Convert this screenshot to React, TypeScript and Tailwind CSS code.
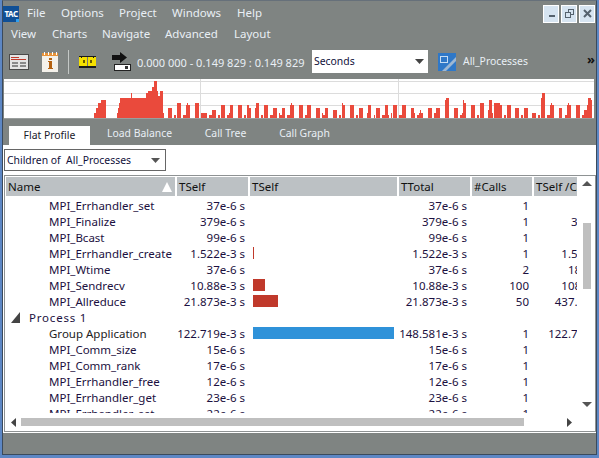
const CHART_A: [number, number, number][] = [
  [282,288,108],[288,294,94],[294,303,78],[303,318,69],[351,354,108],[354,357,94],[357,360,78],[360,393,63],[393,396,48],[396,438,63],[438,444,48],[444,447,42],[447,456,42],[456,462,30],[462,471,12],[471,474,42],[474,480,57],[480,489,42],[489,492,108],
  [504,516,93],[522,528,114],[531,543,78],[549,558,114],[558,561,84],[561,564,78],[564,570,84],[585,597,78],[603,621,108],[627,636,114],[636,648,99],[654,660,114],[663,675,84],[681,687,114],[687,690,108],[690,699,84],[714,726,84],[732,738,114],[741,747,84],[747,753,93],[765,768,93],[768,777,78],[783,789,114],[792,804,84],[810,819,114],[819,831,93],[837,840,108],[840,846,114],[846,855,93],[861,870,114],[870,873,84],[873,876,78],[876,882,84],[897,900,84],
];
const CHART_B: [number, number, number][] = [
  [0,12,84],[18,24,114],[24,36,84],[51,63,93],[69,72,108],[72,78,114],[78,87,93],[102,114,99],[120,126,114],[129,132,78],[132,138,84],[153,165,84],[171,177,114],[180,192,93],[204,207,108],[207,216,84],[225,228,114],[231,243,93],[249,258,114],[258,267,84],[267,270,114],[276,279,108],[282,294,84],[300,309,114],[309,321,84],[336,345,93],[345,348,108],[354,360,114],[360,363,108],[363,366,99],[366,372,108],[387,399,93],[405,411,108],[411,423,93],[438,441,69],[441,450,63],[465,477,93],[483,489,114],[489,492,108],[492,495,69],[495,500,78],[516,528,84],[534,540,114],[543,555,78],[567,570,99],[570,579,69],[579,582,108],[585,603,78],[603,609,84],[615,621,114],[624,636,84],[648,660,93],[666,672,114],[675,687,93],[699,711,108],[717,723,114],[726,729,63],[729,738,48],[744,753,114],[753,756,84],[756,759,78],[759,765,84],[780,789,93],[798,804,114],[804,807,84],[807,810,78],[810,816,84],[831,843,84],[849,855,114],[855,864,99],[864,867,84],[867,876,63],[876,879,69],
];

type Row = { name: string; self: string; total: string; calls: string; avg: string; bar?: number; blue?: boolean; group?: boolean; head?: boolean };
const ROWS: Row[] = [
  { name: "MPI_Errhandler_set", self: "37e-6 s", total: "37e-6 s", calls: "1", avg: "37e-6 s" },
  { name: "MPI_Finalize", self: "379e-6 s", total: "379e-6 s", calls: "1", avg: "379e-6 s" },
  { name: "MPI_Bcast", self: "99e-6 s", total: "99e-6 s", calls: "1", avg: "99e-6 s" },
  { name: "MPI_Errhandler_create", self: "1.522e-3 s", total: "1.522e-3 s", calls: "1", avg: "1.522e-3 s", bar: 1 },
  { name: "MPI_Wtime", self: "37e-6 s", total: "37e-6 s", calls: "2", avg: "18.5e-6 s" },
  { name: "MPI_Sendrecv", self: "10.88e-3 s", total: "10.88e-3 s", calls: "100", avg: "108.8e-6 s", bar: 12 },
  { name: "MPI_Allreduce", self: "21.873e-3 s", total: "21.873e-3 s", calls: "50", avg: "437.46e-6 s", bar: 25 },
  { name: "Process 1", self: "", total: "", calls: "", avg: "", head: true },
  { name: "Group Application", self: "122.719e-3 s", total: "148.581e-3 s", calls: "1", avg: "122.719e-3 s", bar: 141, blue: true, group: true },
  { name: "MPI_Comm_size", self: "15e-6 s", total: "15e-6 s", calls: "1", avg: "15e-6 s" },
  { name: "MPI_Comm_rank", self: "17e-6 s", total: "17e-6 s", calls: "1", avg: "17e-6 s" },
  { name: "MPI_Errhandler_free", self: "12e-6 s", total: "12e-6 s", calls: "1", avg: "12e-6 s" },
  { name: "MPI_Errhandler_get", self: "23e-6 s", total: "23e-6 s", calls: "1", avg: "23e-6 s" },
  { name: "MPI_Errhandler_set", self: "22e-6 s", total: "22e-6 s", calls: "1", avg: "22e-6 s" },
];

function Chart() {
  return (
    <div className="ml-px mr-[2px] h-[40px] shrink-0 bg-white">
      <svg width="590" height="40" viewBox="0 0 590 40" className="block" shapeRendering="crispEdges">
        {[2, 14, 26].map((y) => (
          <rect key={y} x="0" y={y} width="590" height="1" fill="#dcdcdc" />
        ))}
        <rect x="196" y="0" width="1" height="40" fill="#dcdcdc" />
        <rect x="394" y="0" width="1" height="40" fill="#dcdcdc" />
        {CHART_A.map(([a, b, t], i) => (
          <rect key={i} x={a / 3 - 4} y={t / 3 - 2} width={(b - a) / 3} height={(124 - t) / 3 + 1} fill="#ea4a3c" />
        ))}
        {CHART_B.map(([a, b, t], i) => (
          <rect key={i} x={a / 3 + 295} y={t / 3 - 2} width={(b - a) / 3} height={(124 - t) / 3 + 1} fill="#ea4a3c" />
        ))}
        <rect x="0" y="39" width="590" height="1" fill="#9a9e9d" />
      </svg>
    </div>
  );
}

function WinBtn({ children }: { children: React.ReactNode }) {
  return (
    <div className="w-[16px] h-[18px] bg-[#d6e4f1] border border-white flex items-center justify-center">
      <svg width="11" height="11" viewBox="0 0 11 11" shapeRendering="crispEdges" fill="none">
        {children}
      </svg>
    </div>
  );
}

const ITEM = "text-[11.5px] leading-none text-[#e9eff5] pt-px";

export default function App() {
  return (
    <div
      className="w-[599px] h-[458px] overflow-hidden border-l-2 border-r-2 border-b-[3px] border-l-[#5d87c4] border-r-[#5d87c4] border-b-[#5d87c4]"
      style={{ fontFamily: '"Noto Sans", "Open Sans", sans-serif' }}
    >
      <div className="h-full flex flex-col bg-[#7f8482] border-l border-r border-b border-t border-[#3b4a5c] border-t-[#66707a]">
        {/* menu row 1 */}
        <div className="h-[22px] shrink-0 flex items-center relative">
          <div className="relative w-[16px] h-[16px] mt-[3px] bg-[#0f4f96] flex items-center justify-center text-[8px] font-bold leading-none text-white tracking-[-0.5px]">
            TAC
            <div className="absolute right-0 bottom-0 w-[3px] h-[3px] bg-[#2fa0f0]" />
          </div>
          <div className="ml-[8px] flex">
            {[["File", "w-[34px]"], ["Options", "w-[58px]"], ["Project", "w-[53px]"], ["Windows", "w-[65px]"], ["Help", "w-[40px]"]].map(([t, w]) => (
              <span key={t} className={`${ITEM} ${w}`}>{t}</span>
            ))}
          </div>
          <div className="ml-auto mr-[1px] mt-[3px] flex gap-[2px]">
            <WinBtn>
              <rect x="3" y="7" width="6" height="2" fill="#55626e" />
            </WinBtn>
            <WinBtn>
              <rect x="4.5" y="1.5" width="5" height="5" stroke="#55626e" />
              <rect x="1.5" y="4.5" width="5" height="5" fill="#d6e4f1" stroke="#55626e" />
            </WinBtn>
            <WinBtn>
              <path d="M2 2 L9 9 M9 2 L2 9" stroke="#55626e" strokeWidth="2" shapeRendering="auto" />
            </WinBtn>
          </div>
        </div>

        {/* menu row 2 */}
        <div className="h-[21px] shrink-0 flex items-center pl-[8px]">
          {[["View", "w-[41px]"], ["Charts", "w-[50px]"], ["Navigate", "w-[63px]"], ["Advanced", "w-[69px]"], ["Layout", "w-[50px]"]].map(([t, w]) => (
            <span key={t} className={`text-[11.5px] leading-none text-[#e9eff5] ${w}`}>{t}</span>
          ))}
        </div>

        {/* toolbar */}
        <div className="h-[35px] shrink-0 flex items-center relative">
          <svg className="ml-[6px] shrink-0" width="20" height="16" viewBox="0 0 20 16" shapeRendering="crispEdges">
            <rect x="0.5" y="0.5" width="19" height="15" fill="#e4e4e4" stroke="#4a4a4a" />
            <rect x="2" y="3" width="8" height="1" fill="#c0392b" />
            <rect x="2" y="5" width="15" height="1" fill="#c0392b" />
            <rect x="3" y="8" width="6" height="2" fill="#8a8a8a" />
            <rect x="11" y="8" width="6" height="2" fill="#8a8a8a" />
            <rect x="3" y="11" width="6" height="2" fill="#8a8a8a" />
            <rect x="11" y="11" width="6" height="2" fill="#8a8a8a" />
          </svg>
          <svg className="ml-[13px] shrink-0" width="16" height="20" viewBox="0 0 16 20" shapeRendering="crispEdges">
            <rect x="0" y="2" width="16" height="18" fill="#f4f1ea" />
            <rect x="0" y="1" width="16" height="3" fill="#e8943a" />
            <rect x="2" y="0" width="1" height="3" fill="#fff" />
            <rect x="6" y="0" width="1" height="3" fill="#fff" />
            <rect x="10" y="0" width="1" height="3" fill="#fff" />
            <rect x="14" y="0" width="1" height="3" fill="#fff" />
            <rect x="7" y="6" width="3" height="2" fill="#b4610f" />
            <rect x="6" y="9" width="4" height="1" fill="#b4610f" />
            <rect x="7" y="10" width="3" height="6" fill="#b4610f" />
            <rect x="6" y="16" width="5" height="1" fill="#b4610f" />
          </svg>
          <div className="ml-[10px] w-px h-[24px] bg-[#c4c8c6] shrink-0" />
          <svg className="ml-[10px] shrink-0" width="17" height="12" viewBox="0 0 17 12" shapeRendering="crispEdges">
            <rect width="17" height="12" fill="#1a1a1a" />
            <rect x="0" y="1" width="17" height="9" fill="#f5e000" />
            <rect x="8" y="1" width="1" height="9" fill="#777" />
            <rect x="4" y="4" width="2" height="3" fill="#6b5b00" />
            <rect x="11" y="4" width="2" height="3" fill="#6b5b00" />
            <rect x="2" y="0" width="1" height="2" fill="#1a1a1a" />
            <rect x="14" y="0" width="1" height="2" fill="#1a1a1a" />
          </svg>
          <svg className="ml-[16px] shrink-0" width="19" height="19" viewBox="0 0 19 19">
            <rect x="2.5" y="12.5" width="16" height="6" fill="#fff" stroke="#222" />
            <rect x="13" y="14" width="3" height="3" fill="#333" />
            <path d="M0 3 H8 V0 L15 5.5 L8 11 V8 H0 Z" fill="#111" />
          </svg>
          <span className="ml-[6px] w-[175px] shrink-0 pt-px text-[11px] leading-none text-[#e9eff5] whitespace-nowrap">
            0.000 000 - 0.149 829 : 0.149 829
          </span>
          <div className="w-[116px] h-[23px] bg-white shrink-0 flex items-center justify-between pl-[2px] pr-[4px] text-[10.4px] leading-none text-[#10103a]">
            <span>Seconds</span>
            <svg width="9" height="5" viewBox="0 0 9 5"><path d="M0 0 H9 L4.5 5 Z" fill="#444" /></svg>
          </div>
          <svg className="ml-[10px] shrink-0" width="18" height="18" viewBox="0 0 18 18">
            <rect width="18" height="18" fill="#2f78c8" />
            <path d="M18 4 L4 18 H8 L18 8 Z" fill="#9db7d3" />
            <rect x="2.5" y="3.5" width="7" height="6" fill="#2f78c8" stroke="#c6dcf3" />
          </svg>
          <span className="ml-[7px] text-[10.4px] leading-none text-[#e9eff5]">All_Processes</span>
          <span className="absolute right-[1px] top-[9px] text-[13px] font-bold leading-none text-[#111]">»</span>
        </div>

        <Chart />

        {/* tabs */}
        <div className="h-[26px] shrink-0 flex items-end pl-[6px]">
          <div className="w-[81px] h-[19px] bg-white flex items-center justify-center text-[10.4px] leading-none text-[#1a1a2a]">Flat Profile</div>
          {[["Load Balance", "w-[99px]"], ["Call Tree", "w-[73px]"], ["Call Graph", "w-[85px]"]].map(([t, w]) => (
            <div key={t} className={`${w} h-[21px] pb-[2px] flex items-center justify-center text-[10.4px] leading-none text-[#e9eff5]`}>{t}</div>
          ))}
        </div>

        {/* panel */}
        <div className="h-[288px] shrink-0 bg-white pt-[4px] pl-px flex flex-col">
          <div className="w-[162px] h-[22px] shrink-0 border border-[#666] flex items-center justify-between pl-[2px] pr-[5px] text-[10.4px] leading-none text-[#10103a]">
            <span className="whitespace-pre">Children of  All_Processes</span>
            <svg width="9" height="5" viewBox="0 0 9 5"><path d="M0 0 H9 L4.5 5 Z" fill="#555" /></svg>
          </div>

          <div className="mt-[4px] w-[592px] h-[257px] shrink-0 border border-[#8e9293] flex flex-col">
            <div className="h-[237px] shrink-0 flex">
              <div className="w-[572px] shrink-0 overflow-hidden">
                <div className="w-[700px]">
                  <div className="pl-px pt-px flex gap-[2px] h-[20px] text-[11.5px] leading-none text-[#111]">
                    <div className="w-[169px] h-[19px] pt-px bg-[#bcc1c4] flex items-center justify-between pl-[2px] pr-[3px]">
                      <span>Name</span>
                      <svg width="10" height="10" viewBox="0 0 10 10"><path d="M5 0 L10 10 H0 Z" fill="#fff" /></svg>
                    </div>
                    {[["TSelf", "w-[71px]"], ["TSelf", "w-[147px]"], ["TTotal", "w-[71px]"], ["#Calls", "w-[60px]"], ["TSelf /Call", "w-[82px]"]].map(([t, w], i) => (
                      <div key={i} className={`${w} h-[19px] pt-px bg-[#bcc1c4] flex items-center pl-[2px] whitespace-nowrap`}>{t}</div>
                    ))}
                  </div>
                  <div className="mt-px h-[216px] overflow-hidden">
                    {ROWS.map((r, i) => (
                      <div key={i} className="h-[16px] pl-px flex gap-[2px] items-center text-[11.5px] leading-none text-[#1b1040]">
                        <div className={`w-[169px] pt-px whitespace-nowrap flex items-center ${r.head ? "pl-[5px]" : "pl-[43px]"} ${r.group ? "text-[#222]" : ""}`}>
                          {r.head && (
                            <svg className="mr-[9px]" width="9" height="11" viewBox="0 0 9 11"><path d="M9 0 V11 H0 Z" fill="#444" /></svg>
                          )}
                          <span className={r.head ? "tracking-[0.8px]" : ""}>{r.name}</span>
                        </div>
                        <div className="w-[71px] pt-px pr-[3px] text-right whitespace-nowrap">{r.self}</div>
                        <div className="w-[147px] pl-[3px] flex">
                          {r.bar ? <div className={`h-[12px] ${r.blue ? "bg-[#2f92d9]" : "bg-[#c0392b]"}`} style={{ width: r.bar }} /> : null}
                        </div>
                        <div className="w-[71px] pt-px pr-[3px] text-right whitespace-nowrap">{r.total}</div>
                        <div className="w-[60px] pt-px pr-[3px] text-right">{r.calls}</div>
                        <div className="w-[82px] pt-px text-right whitespace-nowrap">{r.avg}</div>
                      </div>
                    ))}
                  </div>
                </div>
              </div>
              {/* vertical scrollbar */}
              <div className="w-[18px] shrink-0 flex flex-col items-center pl-[1px]">
                <svg className="mt-[5px]" width="10" height="5" viewBox="0 0 10 5"><path d="M5 0 L10 5 H0 Z" fill="#555" /></svg>
                <div className="mt-[37px] w-[8px] h-[66px] bg-[#bfbfbf]" />
                <svg className="mt-[113px]" width="10" height="5" viewBox="0 0 10 5"><path d="M0 0 H10 L5 5 Z" fill="#555" /></svg>
              </div>
            </div>
            {/* horizontal scrollbar */}
            <div className="h-[18px] shrink-0 flex items-center pl-[6px]">
              <svg className="shrink-0" width="5" height="9" viewBox="0 0 5 9"><path d="M5 0 V9 L0 4.5 Z" fill="#444" /></svg>
              <div className="ml-[5px] w-[503px] h-[8px] bg-[#bfbfbf] shrink-0" />
              <svg className="ml-[43px] shrink-0" width="5" height="9" viewBox="0 0 5 9"><path d="M0 0 V9 L5 4.5 Z" fill="#444" /></svg>
            </div>
          </div>
        </div>
      </div>
    </div>
  );
}
